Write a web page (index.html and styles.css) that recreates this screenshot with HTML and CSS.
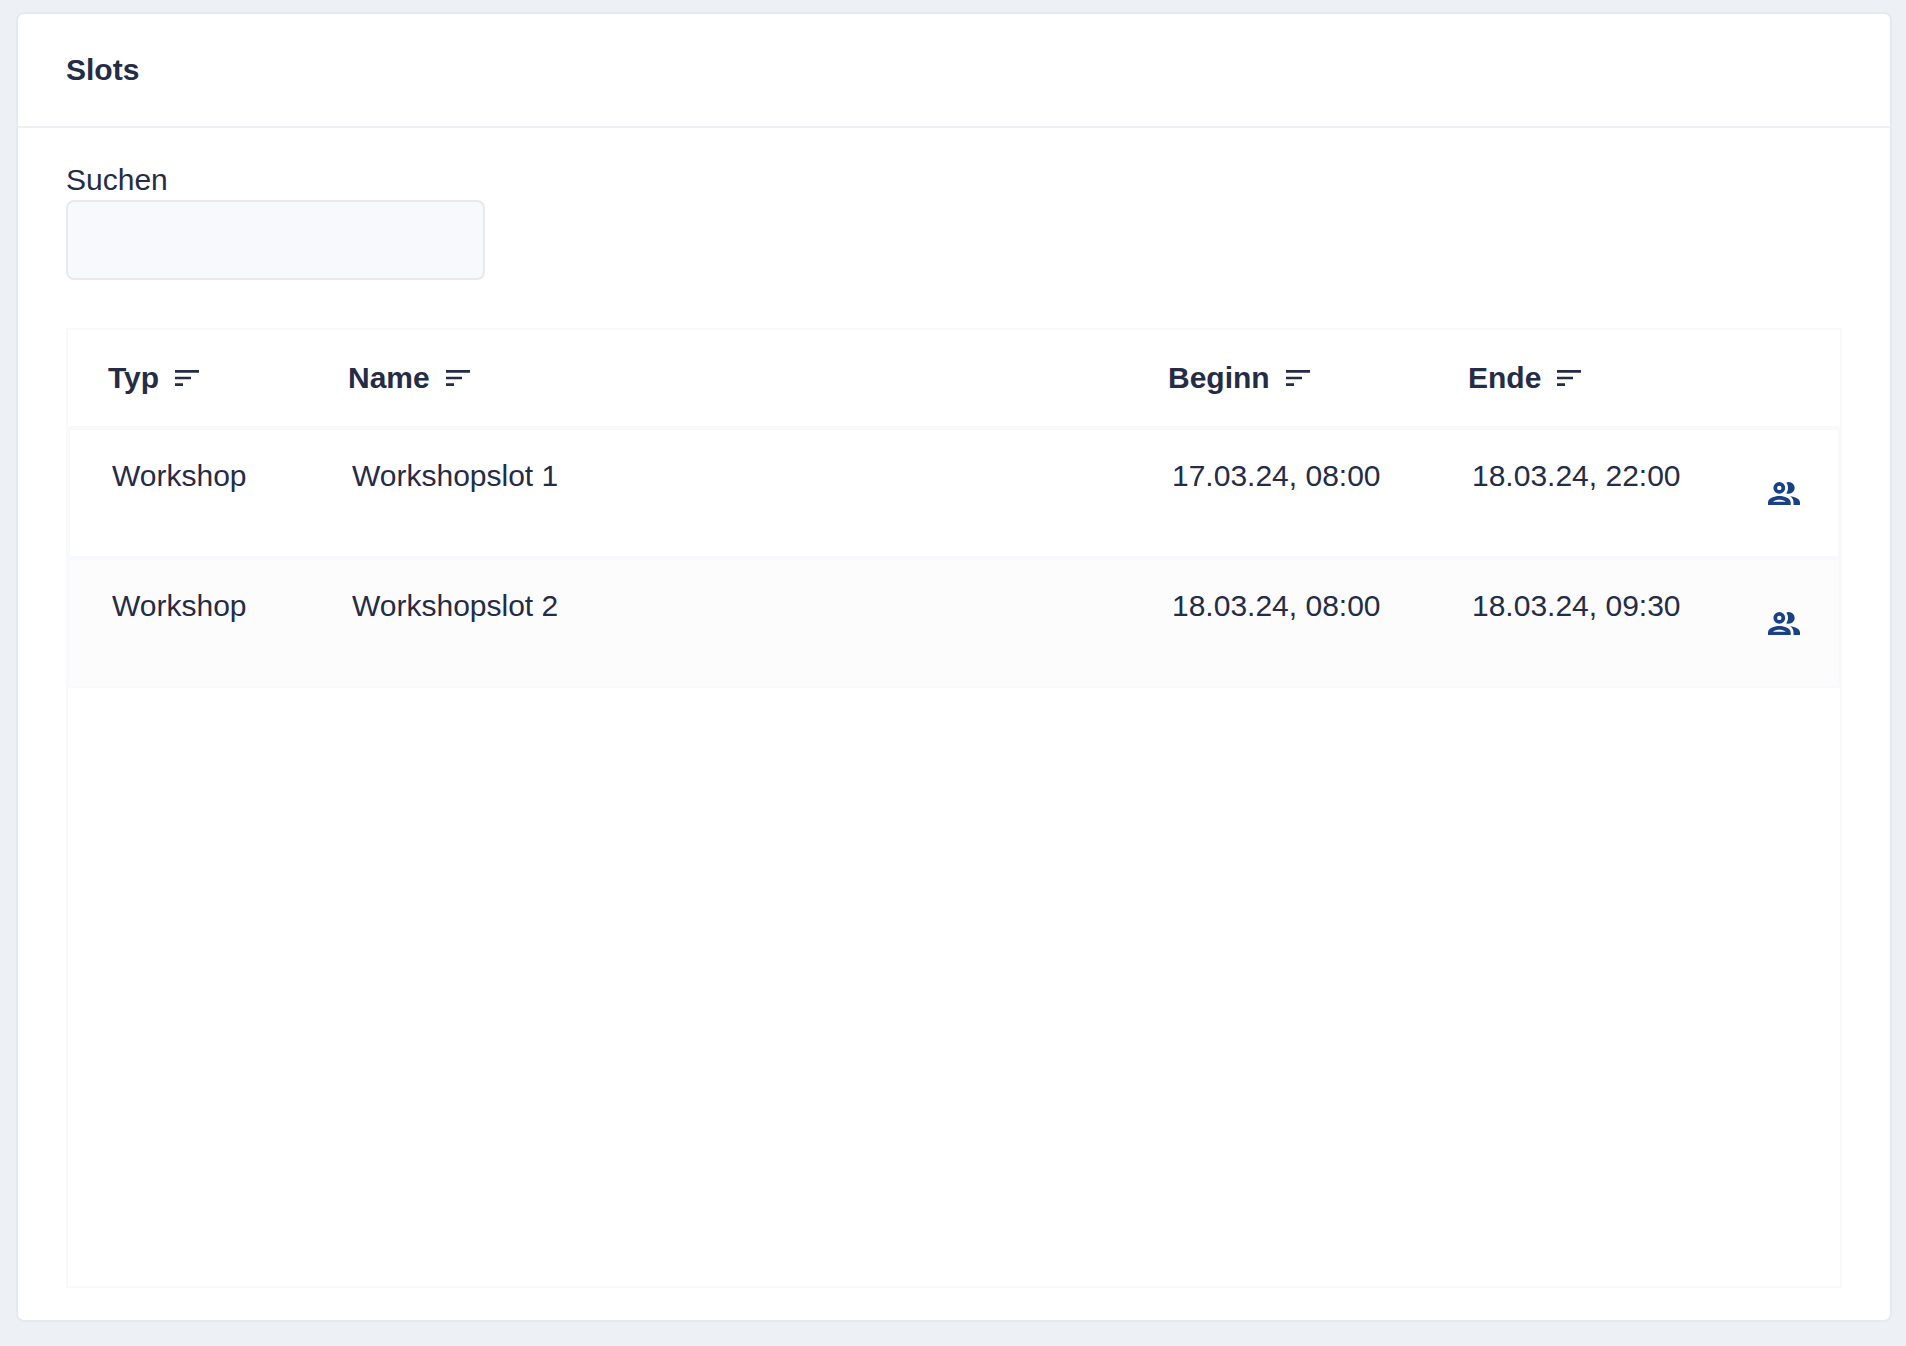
FILE: index.html
```html
<!DOCTYPE html>
<html lang="de">
<head>
<meta charset="utf-8">
<title>Slots</title>
<link rel="stylesheet" href="styles.css">
</head>
<body>
<svg class="sprite" aria-hidden="true">
  <symbol id="sort" viewBox="0 0 24 24"><path d="M3 18h6v-2H3v2zM3 6v2h18V6H3zm0 7h12v-2H3v2z"/></symbol>
  <symbol id="people" viewBox="0 0 32 23">
    <path fill-rule="evenodd" d="M11.300 0a5.900 5.900 0 1 1 0 11.800a5.900 5.900 0 1 1 0-11.800zM11.300 3.700a2.200 2.200 0 1 0 0 4.400a2.200 2.200 0 1 0 0-4.400z"/>
    <path d="M18.300.6C19 .2 20 0 20.800 0a5.900 5.900 0 0 1 0 11.800c-.9 0-1.800-.2-2.500-.6C19.400 9.700 20 7.900 20 5.900S19.400 2.100 18.300.6z"/>
    <path fill-rule="evenodd" d="M0 23v-2.500C0 16.300 6 14 11.300 14s11.400 2.300 11.400 6.500V23zM5 19.700h12.700c-1.700-1.300-4-1.900-6.400-1.900S6.700 18.400 5 19.700z"/>
    <path d="M22.300 14.300C27 14.900 32 16.900 32 20.500V23h-6.500v-2.500c0-2.600-1.200-4.700-3.200-6.200z"/>
  </symbol>
</svg>
<main class="card">
  <header class="card-header"><h1 class="title">Slots</h1></header>
  <div class="card-body">
    <div class="search">
      <label for="search">Suchen</label>
      <input class="search-input" id="search" type="text">
    </div>
    <div class="table-box">
      <table class="slots">
        <colgroup><col class="col-type"><col><col class="col-date"><col class="col-date"><col class="col-action"></colgroup>
        <thead>
          <tr>
            <th scope="col"><button class="sort" type="button">Typ<svg class="sort-icon" aria-hidden="true"><use href="#sort"/></svg></button></th>
            <th scope="col"><button class="sort" type="button">Name<svg class="sort-icon" aria-hidden="true"><use href="#sort"/></svg></button></th>
            <th scope="col"><button class="sort" type="button">Beginn<svg class="sort-icon" aria-hidden="true"><use href="#sort"/></svg></button></th>
            <th scope="col"><button class="sort" type="button">Ende<svg class="sort-icon" aria-hidden="true"><use href="#sort"/></svg></button></th>
            <td></td>
          </tr>
        </thead>
        <tbody>
          <tr>
            <td>Workshop</td><td>Workshopslot 1</td><td>17.03.24, 08:00</td><td>18.03.24, 22:00</td>
            <td class="action"><button class="people" type="button" aria-label="Teilnehmer"><svg class="people-icon" aria-hidden="true"><use href="#people"/></svg></button></td>
          </tr>
          <tr>
            <td>Workshop</td><td>Workshopslot 2</td><td>18.03.24, 08:00</td><td>18.03.24, 09:30</td>
            <td class="action"><button class="people" type="button" aria-label="Teilnehmer"><svg class="people-icon" aria-hidden="true"><use href="#people"/></svg></button></td>
          </tr>
        </tbody>
      </table>
    </div>
  </div>
</main>
</body>
</html>
```
FILE: styles.css
```css
* { box-sizing: border-box; }

body {
  margin: 0;
  padding: 12px 14px 24px 16px;
  background: #edf1f6;
  color: #252c46;
  font: 30px/40px "Liberation Sans", Arial, sans-serif;
}

.sprite { display: none; }

.card {
  background: #fff;
  border: 2px solid #e4e9f2;
  border-radius: 8px;
}

.card-header {
  padding: 36px 48px;
  border-bottom: 2px solid #edf1f7;
}

.title {
  margin: 0;
  font-size: 30px;
  font-weight: bold;
}

.card-body { padding: 32px 48px; }

.search {
  display: flex;
  flex-direction: column;
  align-items: flex-start;
  margin-bottom: 48px;
}

.search-input {
  width: 419px;
  height: 80px;
  padding: 0 32px;
  border: 2px solid #e4e9f2;
  border-radius: 8px;
  background: #f7f9fc;
  color: inherit;
  font: inherit;
}

.table-box {
  min-height: 960px;
  border: 2px solid #f8f9fd;
}

.slots {
  width: 100%;
  table-layout: fixed;
  border-collapse: separate;
  border-spacing: 0;
}

.col-type { width: 240px; }
.col-date { width: 300px; }
.col-action { width: 112px; }

.slots thead th,
.slots thead td {
  padding: 28px 0 28px 40px;
  border-bottom: 2px solid #f7f9fc;
  text-align: left;
}

.slots tbody td {
  height: 130px;
  padding: 26px 0 0 44px;
  border: solid #f7f9fc;
  border-width: 2px 0;
  vertical-align: top;
}

.slots tbody td:first-child {
  padding-left: 42px;
  border-left-width: 2px;
}

.slots tbody td.action {
  padding: 0 0 2px 2px;
  border-right-width: 2px;
  text-align: center;
  vertical-align: middle;
}

.slots tbody tr:nth-child(even) { background: #fcfcfc; }

.sort,
.people {
  border: 0;
  background: none;
  cursor: pointer;
}

.sort {
  display: flex;
  align-items: center;
  gap: 12px;
  padding: 0;
  color: inherit;
  font: inherit;
}

.sort-icon {
  width: 32px;
  height: 32px;
  fill: currentColor;
}

.people {
  padding: 8px;
  color: #1a4183;
  vertical-align: middle;
}

.people-icon {
  display: block;
  width: 32px;
  height: 23px;
  fill: currentColor;
}
```
